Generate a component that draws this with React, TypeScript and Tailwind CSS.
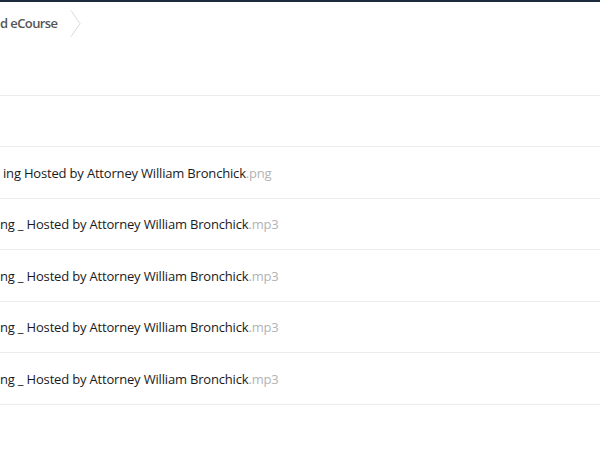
const rows = [
  { name: "ing Hosted by Attorney William Bronchick", ext: ".png", h: "h-[52px] pt-[3px]" },
  { name: "ng _ Hosted by Attorney William Bronchick", ext: ".mp3", h: "h-[51px] pt-[1px]" },
  { name: "ng _ Hosted by Attorney William Bronchick", ext: ".mp3", h: "h-[52px] pt-[3px]" },
  { name: "ng _ Hosted by Attorney William Bronchick", ext: ".mp3", h: "h-[51px] pt-[1px]" },
  { name: "ng _ Hosted by Attorney William Bronchick", ext: ".mp3", h: "h-[52px] pt-[3px]" },
];

const App = () => {
  return (
    <div className="w-[600px] h-[453px] overflow-hidden bg-white font-['Open_Sans',sans-serif]">
      {/* Top bar */}
      <div className="h-[2px] bg-[#1b2a3d]" />

      {/* Breadcrumb */}
      <div className="h-[94px] border-b border-[#ececec]">
        <div className="flex items-center h-[43px] gap-[13px]">
          <span className="text-[13px] font-semibold tracking-[-0.6px] text-[#555]">d eCourse</span>
          <svg width="12" height="27" viewBox="0 0 12 27" className="text-[#d9d9d9]">
            <path d="M1 0.5 L10 13.5 L1 26.5" fill="none" stroke="currentColor" strokeWidth="1" />
          </svg>
        </div>
      </div>

      {/* Files */}
      <div className="h-[51px] border-b border-[#ececec]" />
      {rows.map((r, i) => (
        <div key={i} className={`${r.h} flex items-center border-b border-[#ececec]`}>
          <span className={`text-[13px] tracking-[-0.18px] text-[#1a1a1a] ${i === 0 ? "pl-[3px]" : ""}`}>
            {r.name}
            <span className="text-[#b3b3b3]">{r.ext}</span>
          </span>
        </div>
      ))}
    </div>
  );
};

export default App;
